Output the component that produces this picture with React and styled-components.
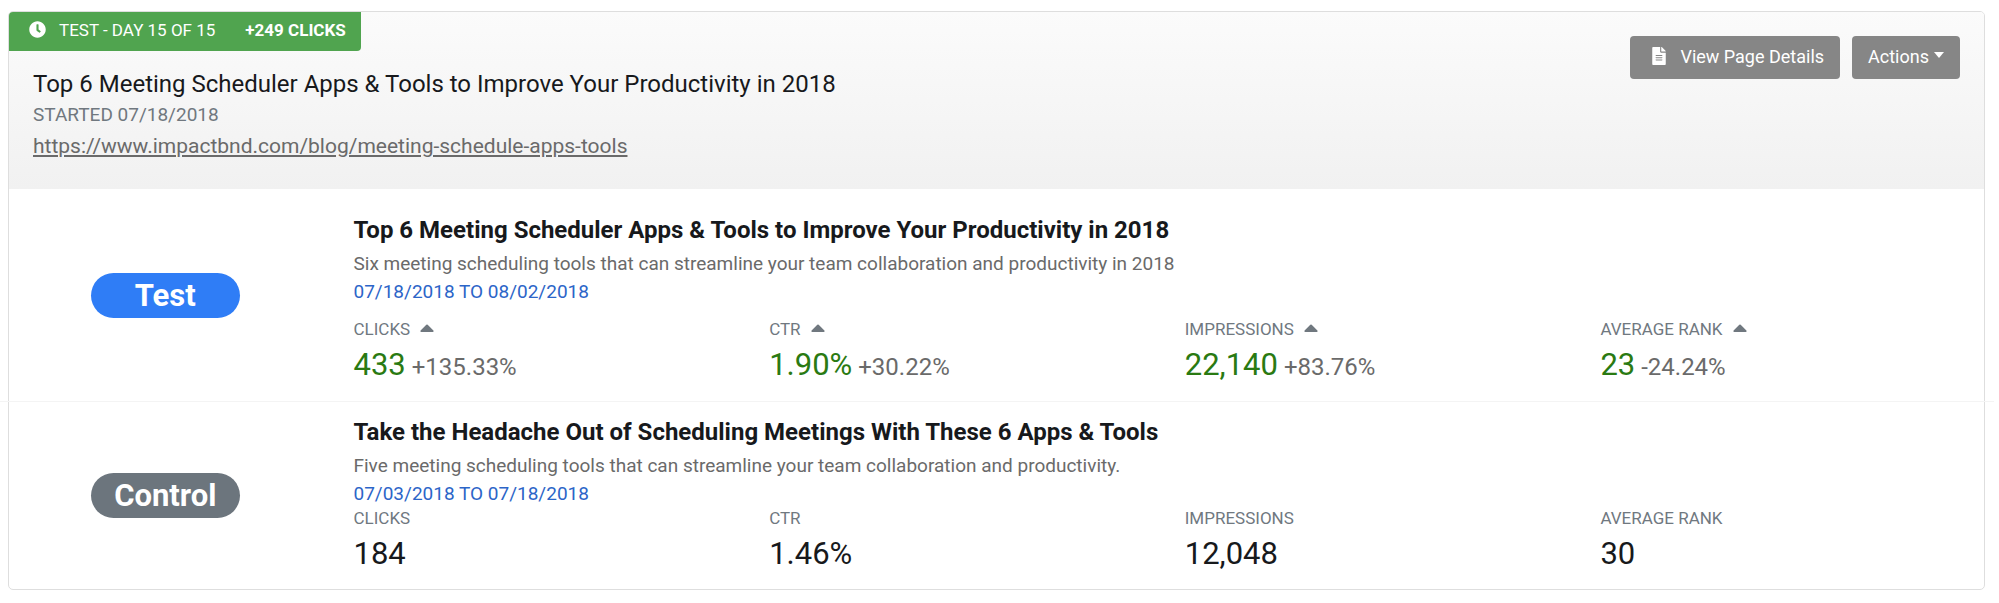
import React from 'react'
import styled, { createGlobalStyle } from 'styled-components'
import { FaClock, FaFileAlt } from 'react-icons/fa'

const theme = {
    text: '#17191c',
    muted: '#70787f',
    grey: '#6a6a6a',
    button: '#868686',
    border: '#dedede',
    divider: '#f4f4f4',
    tab: '#50a44f',
    green: '#2a7a12',
    blue: '#2f7df6',
    slate: '#6c757d',
    date: '#2c65c8',
}

const GlobalStyle = createGlobalStyle`
    * {
        box-sizing: border-box;
    }

    body {
        margin: 0;
        background: #fff;
        color: ${theme.text};
        font-family: Roboto, "Liberation Sans", sans-serif;
    }
`

const Card = styled.article`
    margin: 11px 14px 14px 8px;
    border: 1px solid ${theme.border};
    border-radius: 5px;
    background: #fff;
`

const CardHeader = styled.header`
    display: flex;
    align-items: flex-start;
    justify-content: space-between;
    border-radius: 4px 4px 0 0;
    background: linear-gradient(#fbfbfb, #f1f1f1);
`

const StatusTab = styled.div`
    display: inline-flex;
    align-items: center;
    height: 39px;
    padding: 0 15px 4px 20px;
    border-radius: 4px 0 4px 0;
    background: ${theme.tab};
    color: #fff;
    font-size: 17px;
`

const StatusText = styled.span`
    margin: 0 30px 0 13px;
`

const HeaderInfo = styled.div`
    padding: 18px 24px 26px;
`

const PageTitle = styled.h1`
    margin: 0;
    font-size: 24px;
    font-weight: 400;
    line-height: 31px;
`

const Started = styled.p`
    margin: 0;
    color: ${theme.muted};
    font-size: 19px;
    line-height: 29px;
`

const PageLink = styled.a`
    display: block;
    color: ${theme.grey};
    font-size: 21px;
    line-height: 34px;
    text-decoration: underline;
`

const HeaderActions = styled.div`
    display: flex;
    flex-shrink: 0;
    gap: 12px;
    padding: 24px;
`

const Button = styled.button`
    display: flex;
    align-items: center;
    gap: ${props => props.$gap}px;
    height: 43px;
    padding: 0 16px 3px ${props => props.$wide ? 20 : 16}px;
    border: 0;
    border-radius: 4px;
    background: ${theme.button};
    color: #fff;
    font-family: inherit;
    font-size: 18px;
    cursor: pointer;

    &:hover{
        background: #757575;
    }
`

const Caret = styled.span`
    border-top: 6px solid #fff;
    border-left: 5px solid transparent;
    border-right: 5px solid transparent;
    margin-bottom: 2px;
`

// The rows run a little wider than the card, like a grid with negative gutters
const VariantRow = styled.section`
    display: grid;
    grid-template-columns: 1fr 5fr;
    align-items: center;
    margin: 0 -10px;

    & + & {
        border-top: 1px solid ${theme.divider};
    }
`

const BadgeCell = styled.div`
    display: flex;
    justify-content: center;
`

const Badge = styled.span`
    width: 149px;
    border-radius: 23px;
    background: ${props => props.$test ? theme.blue : theme.slate};
    color: #fff;
    font-size: 31px;
    font-weight: 700;
    line-height: 45px;
    text-align: center;
`

const VariantBody = styled.div`
    padding: ${props => props.$test ? '25px 0 14px' : '14px 0 13px'};
`

const VariantTitle = styled.h2`
    margin: 0;
    padding-left: 22px;
    font-size: 24px;
    font-weight: 700;
    line-height: 33px;
`

const Description = styled.p`
    margin: 0;
    padding-left: 22px;
    color: ${theme.grey};
    font-size: 19px;
    line-height: 33px;
`

const DateRange = styled.p`
    margin: 0;
    padding-left: 22px;
    color: ${theme.date};
    font-size: 19px;
    line-height: 24px;
`

const Metrics = styled.dl`
    display: grid;
    grid-template-columns: repeat(4, 1fr);
    margin: ${props => props.$test ? 13 : 0}px 0 0;
`

const Metric = styled.div`
    padding-left: 22px;
`

const MetricLabel = styled.dt`
    display: flex;
    align-items: center;
    gap: 10px;
    color: ${theme.muted};
    font-size: 17px;
    line-height: 25px;
`

const MetricValue = styled.dd`
    margin: 0;
    color: ${props => props.$test ? theme.green : theme.text};
    font-size: 31px;
    line-height: 45px;
`

const Change = styled.span`
    color: ${theme.grey};
    font-size: 24px;
    line-height: 1;
`

const ArrowIcon = styled.svg`
    width: 14px;
    height: 8px;
    margin-bottom: 3px;
    fill: currentColor;
`

const variants = [
    {
        name: 'Test',
        test: true,
        title: 'Top 6 Meeting Scheduler Apps & Tools to Improve Your Productivity in 2018',
        description: 'Six meeting scheduling tools that can streamline your team collaboration and productivity in 2018',
        dates: '07/18/2018 TO 08/02/2018',
        metrics: [
            { label: 'CLICKS', value: '433', change: '+135.33%' },
            { label: 'CTR', value: '1.90%', change: '+30.22%' },
            { label: 'IMPRESSIONS', value: '22,140', change: '+83.76%' },
            { label: 'AVERAGE RANK', value: '23', change: '-24.24%' },
        ],
    },
    {
        name: 'Control',
        test: false,
        title: 'Take the Headache Out of Scheduling Meetings With These 6 Apps & Tools',
        description: 'Five meeting scheduling tools that can streamline your team collaboration and productivity.',
        dates: '07/03/2018 TO 07/18/2018',
        metrics: [
            { label: 'CLICKS', value: '184' },
            { label: 'CTR', value: '1.46%' },
            { label: 'IMPRESSIONS', value: '12,048' },
            { label: 'AVERAGE RANK', value: '30' },
        ],
    },
]

function UpArrow() {
    return (
        <ArrowIcon viewBox="0 0 14 8" aria-hidden="true">
            <path d="M1.2 8h11.6c.8 0 1.1-.9.6-1.4L7.7.8a1 1 0 0 0-1.4 0L.6 6.6C.1 7.1.4 8 1.2 8z" />
        </ArrowIcon>
    )
}

function Variant({ variant }) {
    const test = variant.test

    return (
        <VariantRow>
            <BadgeCell>
                <Badge $test={test}>{variant.name}</Badge>
            </BadgeCell>

            <VariantBody $test={test}>
                <VariantTitle>{variant.title}</VariantTitle>
                <Description>{variant.description}</Description>
                <DateRange>{variant.dates}</DateRange>

                {/* METRICS */}
                <Metrics $test={test}>
                    {variant.metrics.map(metric => (
                        <Metric key={metric.label}>
                            <MetricLabel>
                                {metric.label}
                                {metric.change && <UpArrow />}
                            </MetricLabel>
                            <MetricValue $test={test}>
                                {metric.value}
                                {metric.change && <Change> {metric.change}</Change>}
                            </MetricValue>
                        </Metric>
                    ))}
                </Metrics>
            </VariantBody>
        </VariantRow>
    )
}

function App() {
    return (
        <>
            <GlobalStyle />
            <Card>
                <CardHeader>
                    <div>
                        {/* TEST STATUS */}
                        <StatusTab>
                            <FaClock size={17} />
                            <StatusText>TEST - DAY 15 OF 15</StatusText>
                            <strong>+249 CLICKS</strong>
                        </StatusTab>

                        {/* PAGE INFO */}
                        <HeaderInfo>
                            <PageTitle>Top 6 Meeting Scheduler Apps & Tools to Improve Your Productivity in 2018</PageTitle>
                            <Started>STARTED 07/18/2018</Started>
                            <PageLink href="https://www.impactbnd.com/blog/meeting-schedule-apps-tools">
                                https://www.impactbnd.com/blog/meeting-schedule-apps-tools
                            </PageLink>
                        </HeaderInfo>
                    </div>

                    <HeaderActions>
                        <Button type="button" $wide $gap={12}>
                            <FaFileAlt size={18} />
                            View Page Details
                        </Button>
                        <Button type="button" $gap={5}>
                            Actions
                            <Caret />
                        </Button>
                    </HeaderActions>
                </CardHeader>

                {variants.map(variant => <Variant key={variant.name} variant={variant} />)}
            </Card>
        </>
    )
}

export default App
